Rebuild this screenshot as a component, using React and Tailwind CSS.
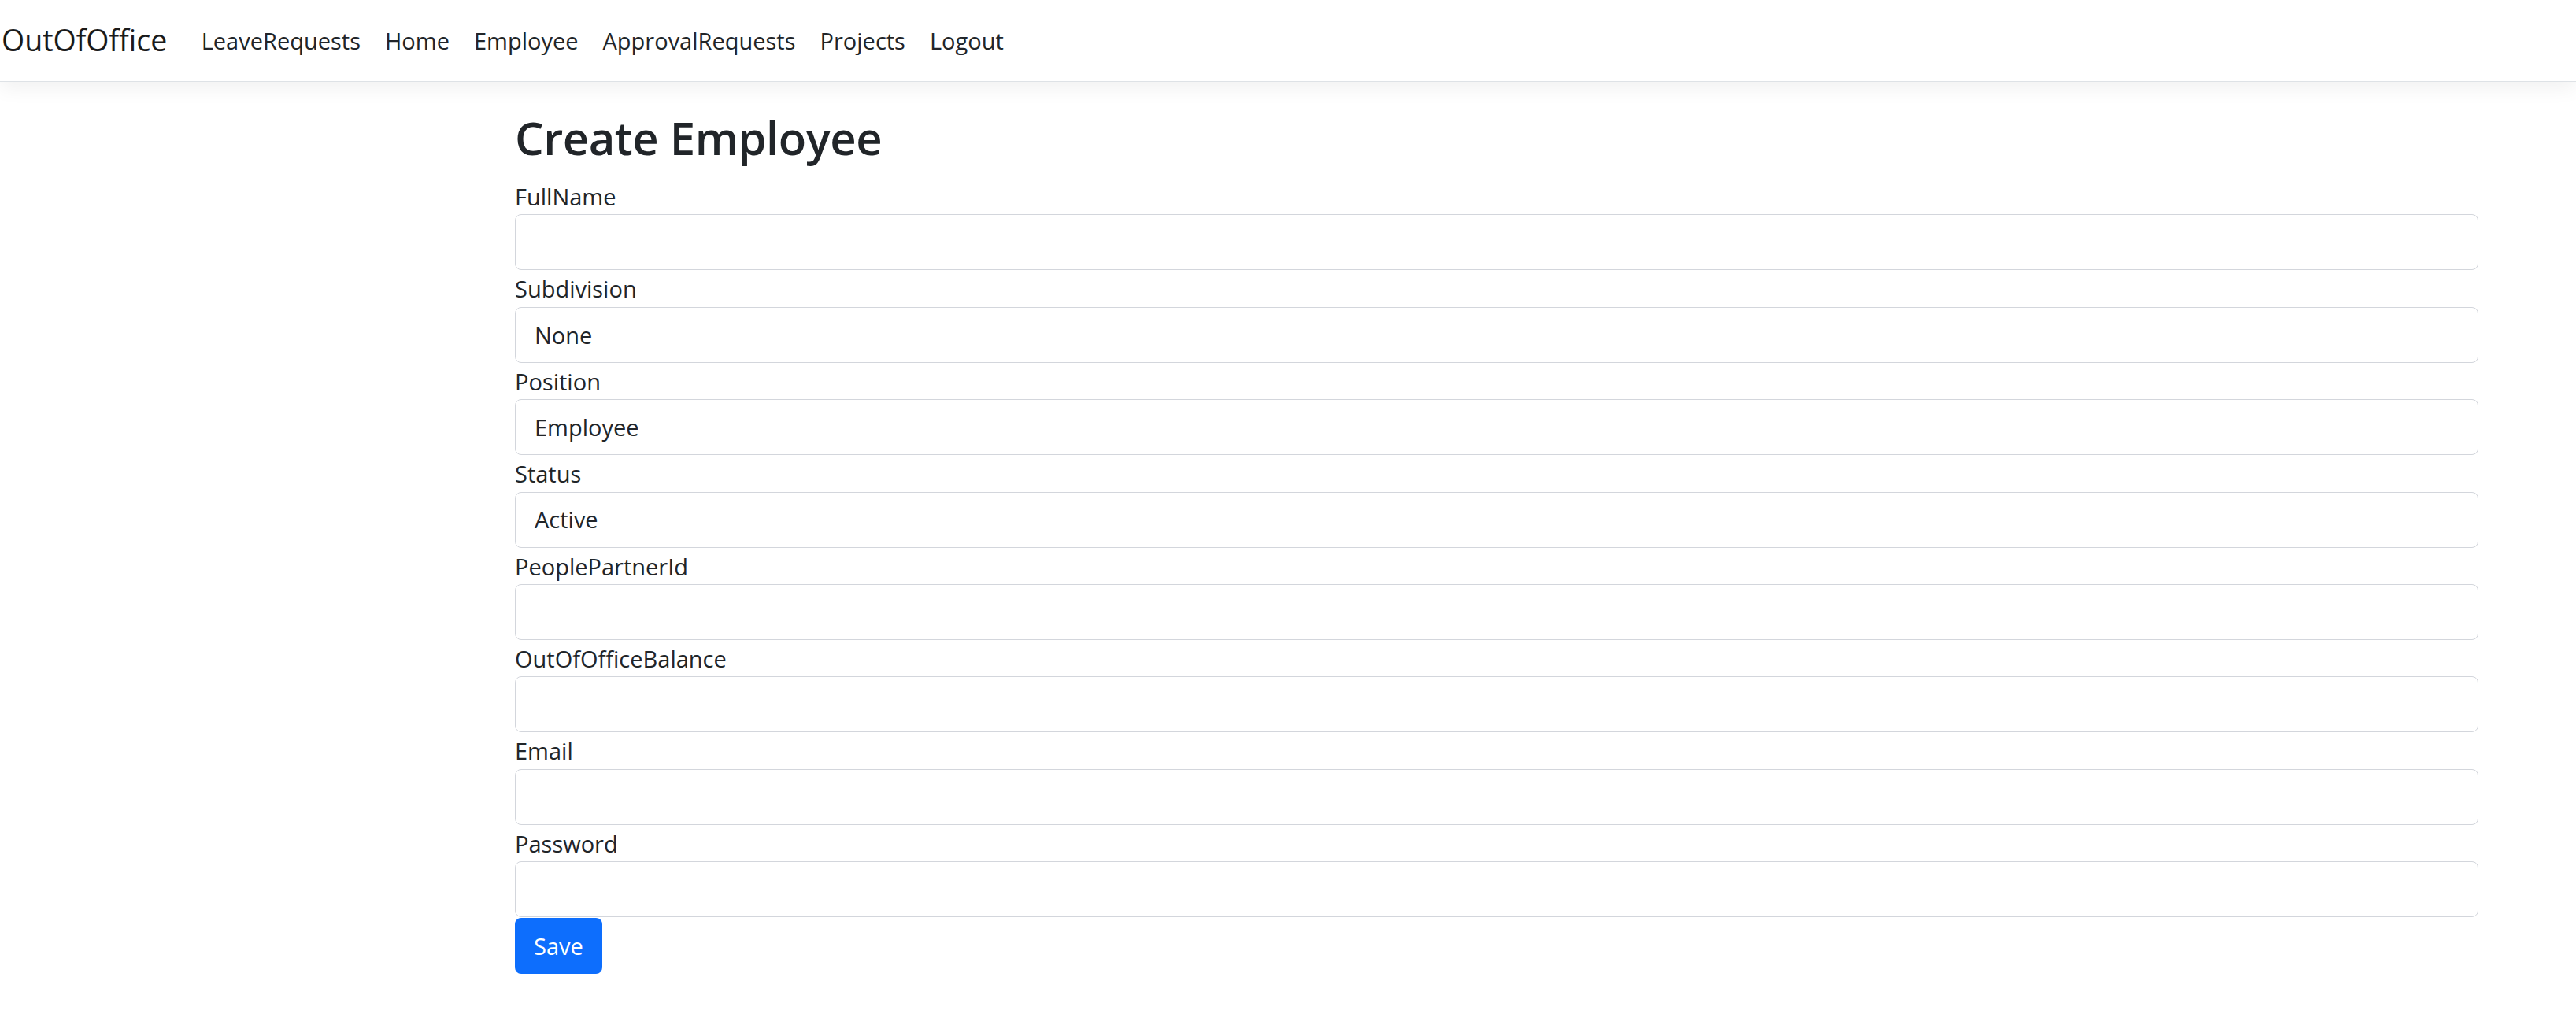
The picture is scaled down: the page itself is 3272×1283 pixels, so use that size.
import React from 'react';

const links = ['LeaveRequests', 'Home', 'Employee', 'ApprovalRequests', 'Projects', 'Logout'];

const fields = [
  { label: 'FullName', value: '' },
  { label: 'Subdivision', value: 'None' },
  { label: 'Position', value: 'Employee' },
  { label: 'Status', value: 'Active' },
  { label: 'PeoplePartnerId', value: '' },
  { label: 'OutOfOfficeBalance', value: '' },
  { label: 'Email', value: '' },
  { label: 'Password', value: '' },
];

const Navbar = () => (
  <header className="relative z-10 flex h-[104px] items-center border-b border-[#dee2e6] bg-white pl-[2px] shadow-[0_8px_24px_rgba(0,0,0,0.06)]">
    <a className="mr-[28px] text-[37.5px] text-[#1a1a1a]">OutOfOffice</a>
    <nav className="flex items-center">
      {links.map((l) => (
        <a key={l} className="px-[15.5px] text-[29px] text-[#212529]">
          {l}
        </a>
      ))}
    </nav>
  </header>
);

const Field = ({ label, value }) => (
  <div className="flex flex-col">
    <label className="h-[46.4px] pt-[1px] text-[29px] leading-[45px]">{label}</label>
    <div className="flex h-[71px] items-center rounded-[8px] border border-[#d3d6dc] bg-white px-[24px] text-[29px]">
      {value}
    </div>
  </div>
);

export default function App() {
  return (
    <div className="min-h-screen bg-white font-['Open_Sans','Noto_Sans',sans-serif] text-[#212529]">
      <Navbar />
      <main className="pl-[654px] pr-[124px] pt-[35px]">
        <h2 className="mb-[15px] text-[58px] font-semibold leading-[72px] tracking-[-0.5px]">Create Employee</h2>
        <form className="flex flex-col">
          {fields.map((f) => (
            <Field key={f.label} {...f} />
          ))}
          <div>
            <button
              type="button"
              className="mt-[1px] h-[71px] w-[111px] rounded-[8px] bg-[#0d6efd] text-[29px] text-white"
            >
              Save
            </button>
          </div>
        </form>
      </main>
    </div>
  );
}
